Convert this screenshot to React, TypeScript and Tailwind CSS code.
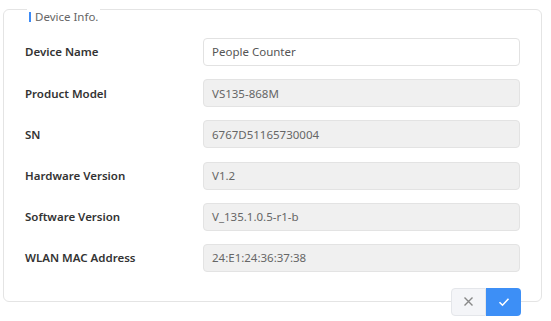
const fields = [
  { label: "Device Name", value: "People Counter", editable: true },
  { label: "Product Model", value: "VS135-868M" },
  { label: "SN", value: "6767D51165730004" },
  { label: "Hardware Version", value: "V1.2" },
  { label: "Software Version", value: "V_135.1.0.5-r1-b" },
  { label: "WLAN MAC Address", value: "24:E1:24:36:37:38" }
];

export default function App() {
  return (
    <div className="h-[321px] w-[551px] overflow-hidden bg-white font-['Noto_Sans',sans-serif]">
      <fieldset className="ml-[3px] mr-[9px] rounded-[6px] border border-[#e4e4e4] px-[21px] pt-[20px] pb-[29px]">
        <legend className="ml-[2px] h-[18px] px-[2px] text-[11.5px] leading-[18px] text-[#666]">
          <span className="relative top-[8px]">
            <span className="mr-[4px] inline-block h-[10px] w-[2px] bg-[#3d8bf6] align-[-1px]" />
            Device Info.
          </span>
        </legend>
        <div className="flex flex-col gap-[13.2px]">
          {fields.map((f) => (
            <div key={f.label} className="flex items-center">
              <span className="w-[178px] text-[11.5px] font-semibold text-[#333]">
                {f.label}
              </span>
              <div
                className={
                  f.editable
                    ? "flex h-[28px] w-[317px] items-center rounded-[4px] border border-[#e2e2e2] bg-white px-[8px] text-[11.5px] text-[#555]"
                    : "flex h-[28px] w-[317px] items-center rounded-[4px] border border-[#e3e3e3] bg-[#f0f0f0] px-[8px] text-[11.5px] text-[#666]"
                }
              >
                {f.value}
              </div>
            </div>
          ))}
        </div>
      </fieldset>
      <div className="mt-[-14px] flex justify-end pr-[30px]">
        <button className="flex h-[28px] w-[35px] items-center justify-center rounded-l-[4px] border border-[#e4e6ea] bg-[#f4f5f8] text-[#888]">
          <svg width="11" height="11" viewBox="0 0 11 11" fill="none" stroke="currentColor" strokeWidth="1.4">
            <path d="M1.5 1.5l8 8M9.5 1.5l-8 8" />
          </svg>
        </button>
        <button className="flex h-[28px] w-[35px] items-center justify-center rounded-r-[4px] bg-[#3d8ff6] text-white">
          <svg width="12" height="10" viewBox="0 0 12 10" fill="none" stroke="currentColor" strokeWidth="1.6">
            <path d="M1.5 5.2l3 3 6-6.5" />
          </svg>
        </button>
      </div>
      <div className="mt-[5px] h-[2px] w-full bg-[#fde9e4]" />
    </div>
  );
}
